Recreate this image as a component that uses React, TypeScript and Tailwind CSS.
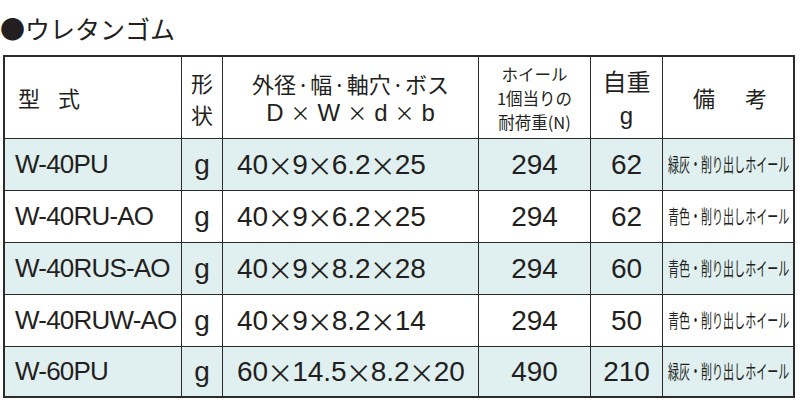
const rows = [
	{ model: 'W-40PU', size: ['40', '9', '6.2', '25'], load: '294', weight: '62', note: '緑灰・削り出しホイール', tint: true },
	{ model: 'W-40RU-AO', size: ['40', '9', '6.2', '25'], load: '294', weight: '62', note: '青色・削り出しホイール', tint: false },
	{ model: 'W-40RUS-AO', size: ['40', '9', '8.2', '28'], load: '294', weight: '60', note: '青色・削り出しホイール', tint: true },
	{ model: 'W-40RUW-AO', size: ['40', '9', '8.2', '14'], load: '294', weight: '50', note: '青色・削り出しホイール', tint: false },
	{ model: 'W-60PU', size: ['60', '14.5', '8.2', '20'], load: '490', weight: '210', note: '緑灰・削り出しホイール', tint: true },
]

const jp = "font-['Noto_Sans_CJK_JP',sans-serif]"
const latin = "font-['Liberation_Sans','Noto_Sans_CJK_JP',sans-serif]"

export default function App() {
	return (
		<div className="w-[800px] h-[400px] bg-white text-[#231f20] overflow-hidden">
			<div className={`h-[55px] pt-[11px] text-[25px] leading-[34px] ${jp}`}>●ウレタンゴム</div>

			<div className="ml-[3px] w-[792px] border-2 border-[#2b2b2b] grid grid-cols-[177px_41px_256px_112px_72px_130px]">
				{/* header */}
				<div className={`h-[82px] border-r border-b border-[#2b2b2b] flex items-center pl-[13px] text-[22px] tracking-[18px] ${jp}`}>
					型式
				</div>
				<div className={`border-r border-b border-[#2b2b2b] flex flex-col items-center justify-center text-[22px] leading-[32px] ${jp}`}>
					<span>形</span>
					<span>状</span>
				</div>
				<div className="border-r border-b border-[#2b2b2b] flex flex-col items-center justify-center">
					<span className={`text-[22px] leading-[30px] ${jp}`}>
						外径<span className="mx-[1px]">·</span>幅<span className="mx-[1px]">·</span>軸穴<span className="mx-[1px]">·</span>ボス
					</span>
					<span className={`flex items-center text-[24px] leading-[30px] ${latin}`}>
						D<span className={`${jp} text-[20px] mx-[7px]`}>×</span>W<span className={`${jp} text-[20px] mx-[7px]`}>×</span>d<span className={`${jp} text-[20px] mx-[7px]`}>×</span>b
					</span>
				</div>
				<div className={`border-r border-b border-[#2b2b2b] flex flex-col items-center justify-center text-[16.5px] leading-[24px] ${jp}`}>
					<span>ホイール</span>
					<span>1個当りの</span>
					<span>耐荷重(N)</span>
				</div>
				<div className={`border-r border-b border-[#2b2b2b] flex flex-col items-center justify-center text-[24px] leading-[35px] ${jp}`}>
					<span>自重</span>
					<span className={latin}>g</span>
				</div>
				<div className={`border-b border-[#2b2b2b] flex items-center justify-center pl-[8px] text-[22px] tracking-[4px] ${jp}`}>
					備　考
				</div>

				{rows.map((r, i) => {
					const last = i === rows.length - 1
					const bg = r.tint ? 'bg-[#e0f0f0]' : 'bg-white'
					const h = last ? 'h-[49px]' : 'h-[52px]'
					const bb = last ? '' : 'border-b'
					return (
						<div key={r.model} className="contents">
							<div className={`${h} ${bg} ${bb} border-r border-[#2b2b2b] flex items-center pl-[10px] whitespace-nowrap text-[26px] tracking-[-0.8px] ${latin}`}>
								{r.model}
							</div>
							<div className={`${bg} ${bb} border-r border-[#2b2b2b] flex items-center justify-center text-[28px] ${latin}`}>
								g
							</div>
							<div className={`${bg} ${bb} border-r border-[#2b2b2b] flex items-center pl-[14px] whitespace-nowrap text-[28px] ${latin}`}>
								{r.size.map((s, j) => (
									<span key={j} className="flex items-center">
										{j > 0 && <span className={`mx-[-1px] text-[26px] ${jp}`}>×</span>}
										{s}
									</span>
								))}
							</div>
							<div className={`${bg} ${bb} border-r border-[#2b2b2b] flex items-center justify-center text-[28px] ${latin}`}>
								{r.load}
							</div>
							<div className={`${bg} ${bb} border-r border-[#2b2b2b] flex items-center justify-center text-[28px] ${latin}`}>
								{r.weight}
							</div>
							<div className={`${bg} ${bb} border-[#2b2b2b] flex items-center pl-[5px] overflow-hidden`}>
								<span className={`inline-block whitespace-nowrap origin-left scale-x-[0.58] text-[19px] ${jp}`}>{r.note}</span>
							</div>
						</div>
					)
				})}
			</div>
		</div>
	)
}
